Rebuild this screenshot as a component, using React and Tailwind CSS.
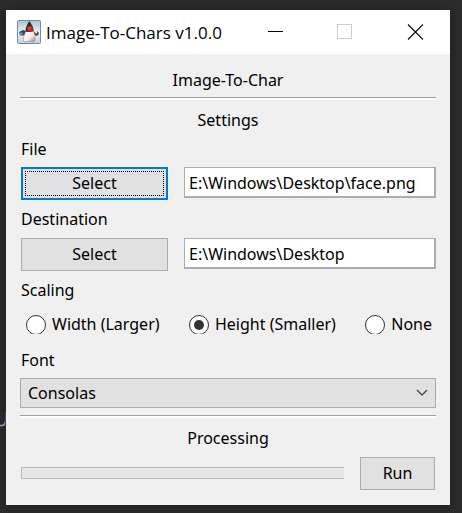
import { useState } from "react";

function DukeIcon() {
  return (
    <svg viewBox="0 0 24 24" className="size-6 shrink-0" aria-hidden="true">
      <defs>
        <linearGradient id="tile" x1="0" y1="0" x2="0" y2="1">
          <stop offset="0" stopColor="#adc0d0" />
          <stop offset="0.55" stopColor="#f4f4f4" />
          <stop offset="1" stopColor="#c3ccd3" />
        </linearGradient>
        <linearGradient id="belly" x1="0" y1="0" x2="1" y2="1">
          <stop offset="0" stopColor="#ffffff" />
          <stop offset="0.6" stopColor="#eeeeee" />
          <stop offset="1" stopColor="#888888" />
        </linearGradient>
      </defs>
      <rect x="0.5" y="0.5" width="23" height="23" rx="1" fill="url(#tile)" stroke="#6f8dab" />
      <path d="M2 12 L6 10 L9 11 L7.5 15.5 L3 15.5 Z" fill="#3f4a54" />
      <path d="M2 13 L5.5 12.5 L5.5 14.5 L2.5 15 Z" fill="#62a8dc" />
      <path d="M16.5 10.5 C18 13 19 14 20.3 13.2 L19.8 11 L21.8 12.5 L21.5 15 C19.5 16.5 17.5 15.5 16.5 13.5 Z" fill="#444" />
      <path d="M9 11 C7.5 15 5.5 19 6.5 21 C9 22.5 11 21 13 21.2 C15.5 21.5 17.5 22 18 20 C18.5 17 17.8 13.5 16 11 Z" fill="url(#belly)" stroke="#777" strokeWidth="0.4" />
      <path d="M12.2 1 C11 3 8.8 6.5 8.3 11.5 C10 12.2 14 12.2 16.6 11 C16.8 8 14.8 4 12.2 1 Z" fill="#292b2d" />
      <circle cx="13" cy="8.8" r="2.9" fill="#d91f26" />
      <circle cx="12.4" cy="8.2" r="1" fill="#f4484c" />
    </svg>
  );
}

function Separator() {
  return <hr className="h-[3px] border-0 border-t border-[#a0a0a0] bg-white" />;
}

function PathRow({ id, value, onChange, focused }) {
  return (
    <div className="flex items-start gap-4">
      <button
        type="button"
        className={
          focused
            ? "ml-px h-[33px] w-[147px] shrink-0 border-2 border-[#0078d7] bg-[#e1e1e1] p-[2px] outline-none"
            : "ml-px h-[33px] w-[147px] shrink-0 border border-[#adadad] bg-[#e1e1e1] p-[3px]"
        }
      >
        <span
          className={
            focused
              ? "flex h-full items-center justify-center border border-dotted border-black pb-px"
              : "flex h-full items-center justify-center pb-px"
          }
        >
          Select
        </span>
      </button>
      <input
        id={id}
        type="text"
        value={value}
        onChange={(e) => onChange(e.target.value)}
        className="h-[31px] min-w-0 flex-1 border border-r-2 border-b-2 border-[#abadb3] bg-white px-1 pt-px outline-none"
      />
    </div>
  );
}

export default function App() {
  const [file, setFile] = useState("E:\\Windows\\Desktop\\face.png");
  const [dest, setDest] = useState("E:\\Windows\\Desktop");
  const [scale, setScale] = useState("Height (Smaller)");

  return (
    <div className="relative min-h-screen overflow-hidden bg-[#2b2b2b] pt-[10px] pr-3 pb-2 pl-[6px] font-['Noto_Sans',sans-serif] text-base leading-6 text-black">
      <svg className="absolute top-[412px] left-0 h-[15px] w-[6px]" viewBox="0 0 6 15" aria-hidden="true">
        <path d="M0 13.5H2.5Q5 13 5.2 9.5" fill="none" stroke="#a4adbe" strokeWidth="1.6" />
        <path d="M5.4 0V12" stroke="#3d4f96" strokeWidth="1.2" />
      </svg>
      <main className="relative bg-[#f0f0f0] shadow-[0_2px_12px_rgba(0,0,0,0.3)]">
        <header className="flex h-11 items-center bg-white pl-[11px]">
          <DukeIcon />
          <h1 className="ml-[5px] flex-1 pt-px font-['Open_Sans',sans-serif] text-[17px] whitespace-nowrap">Image-To-Chars v1.0.0</h1>
          <button type="button" aria-label="Minimize" className="flex h-11 w-[70px] shrink-0 items-center justify-center">
            <svg className="size-4" viewBox="0 0 16 16"><path d="M1 7.5H16" stroke="#000" /></svg>
          </button>
          <button type="button" aria-label="Maximize" disabled className="flex h-11 w-[70px] shrink-0 items-center justify-center">
            <svg className="size-4" viewBox="0 0 16 16"><rect x="0.5" y="0.5" width="14" height="14" fill="none" stroke="#ccc" /></svg>
          </button>
          <button type="button" aria-label="Close" className="flex h-11 w-[70px] shrink-0 items-center justify-center">
            <svg className="size-4" viewBox="0 0 16 16"><path d="M1 0.5L16 15.5M16 0.5L1 15.5" stroke="#000" strokeWidth="1.1" /></svg>
          </button>
        </header>

        <form className="flex flex-col px-[14px] pt-[14px] pb-[15px]" onSubmit={(e) => e.preventDefault()}>
          <h2 className="mb-[5px] text-center">Image-To-Char</h2>
          <Separator />
          <h3 className="mt-2 text-center">Settings</h3>

          <label htmlFor="file" className="mt-[5px] mb-[6px] ml-px">File</label>
          <PathRow id="file" value={file} onChange={setFile} focused />

          <label htmlFor="dest" className="my-[7px] ml-px">Destination</label>
          <PathRow id="dest" value={dest} onChange={setDest} />

          <fieldset className="mt-[7px]">
            <legend className="ml-px">Scaling</legend>
            <div className="mt-[10px] flex justify-between pr-1 pl-[6px]">
              {["Width (Larger)", "Height (Smaller)", "None"].map((name) => (
                <label key={name} className="flex items-center gap-[6px] whitespace-nowrap">
                  <span className="h-[19px] overflow-hidden">
                    <input
                      type="radio"
                      name="scale"
                      checked={scale === name}
                      onChange={() => setScale(name)}
                      className="block size-5 appearance-none rounded-full border border-[#333] bg-white bg-clip-padding p-1 before:block before:size-full before:rounded-full checked:before:bg-[#333]"
                    />
                  </span>
                  {name}
                </label>
              ))}
            </div>
          </fieldset>

          <label htmlFor="font" className="mt-3 mb-[6px] ml-px">Font</label>
          <div className="relative mb-[7px]">
            <select id="font" className="block h-[30px] w-full appearance-none border border-[#adadad] bg-[#e1e1e1] px-[7px] outline-none">
              <option>Consolas</option>
            </select>
            <svg className="pointer-events-none absolute top-[11px] right-2 h-2 w-3" viewBox="0 0 12 8">
              <path d="M1 1L6 6L11 1" fill="none" stroke="#444" strokeWidth="1.3" />
            </svg>
          </div>
          <Separator />

          <h3 className="mt-2 mb-[7px] text-center">Processing</h3>
          <div className="flex items-start gap-4 px-px">
            <div role="progressbar" aria-label="Processing" aria-valuenow={0} className="mt-[10px] h-3 flex-1 border border-r-0 border-[#bcbcbc] bg-[#e6e6e6]" />
            <button type="submit" className="h-[33px] w-[75px] border border-[#adadad] bg-[#e1e1e1] pb-px">Run</button>
          </div>
        </form>
      </main>
    </div>
  );
}
